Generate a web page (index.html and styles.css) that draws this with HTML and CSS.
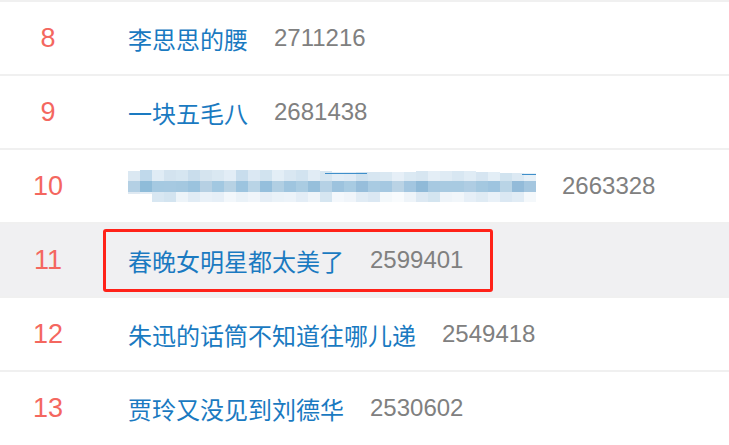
FILE: index.html
```html
<!DOCTYPE html>
<html lang="zh-CN">
<head>
    <meta charset="UTF-8">
    <meta name="viewport" content="width=device-width, initial-scale=1.0">
    <title>热搜榜</title>
    <link rel="stylesheet" href="styles.css">
</head>
<body>

    <ul class="hot-list">
        <li class="hot-item">
            <span class="rank">8</span>
            <a class="entry" href="#">
                <span class="title">李思思的腰</span>
                <span class="count">2711216</span>
            </a>
        </li>
        <li class="hot-item">
            <span class="rank">9</span>
            <a class="entry" href="#">
                <span class="title">一块五毛八</span>
                <span class="count">2681438</span>
            </a>
        </li>
        <li class="hot-item">
            <span class="rank">10</span>
            <a class="entry" href="#">
                <!-- title is pixelated in the source image -->
                <svg class="mosaic" width="408" height="33" viewBox="0 0 408 33" shape-rendering="crispEdges">
                    <g>
                        <rect x="0" y="1" width="12" height="10" fill="#dbe8f2"/><rect x="12" y="0" width="12" height="11" fill="#c0d9eb"/>
                        <rect x="24" y="0" width="12" height="11" fill="#e0ecf5"/><rect x="36" y="0" width="12" height="11" fill="#d3e3ef"/>
                        <rect x="48" y="0" width="12" height="11" fill="#d6e6f1"/><rect x="60" y="0" width="12" height="11" fill="#c9ddec"/>
                        <rect x="72" y="0" width="12" height="11" fill="#d5e4ef"/><rect x="84" y="0" width="12" height="11" fill="#dae8f2"/>
                        <rect x="96" y="0" width="12" height="11" fill="#e2edf6"/><rect x="108" y="0" width="12" height="11" fill="#c8dded"/>
                        <rect x="120" y="0" width="12" height="11" fill="#dbe8f3"/><rect x="132" y="0" width="12" height="11" fill="#d1e3ef"/>
                        <rect x="144" y="0" width="12" height="11" fill="#e3eef6"/><rect x="156" y="0" width="12" height="11" fill="#d9e7f2"/>
                        <rect x="168" y="0" width="12" height="11" fill="#d2e3f0"/><rect x="180" y="0" width="12" height="11" fill="#e1ecf5"/>
                        <rect x="192" y="1" width="12" height="10" fill="#d6e6f1"/><rect x="204" y="2" width="12" height="9" fill="#e2edf6"/>
                        <rect x="216" y="2" width="12" height="9" fill="#e0ebf5"/><rect x="228" y="2" width="12" height="9" fill="#d0e2ef"/>
                        <rect x="240" y="2" width="12" height="9" fill="#d7e6f1"/><rect x="252" y="2" width="12" height="9" fill="#dae8f2"/>
                        <rect x="264" y="2" width="12" height="9" fill="#e6eff7"/><rect x="276" y="2" width="12" height="9" fill="#dbe9f3"/>
                        <rect x="288" y="1" width="12" height="10" fill="#d7e6f1"/><rect x="300" y="1" width="12" height="10" fill="#e4eef6"/>
                        <rect x="312" y="1" width="12" height="10" fill="#dfebf4"/><rect x="324" y="1" width="12" height="10" fill="#d8e7f2"/>
                        <rect x="336" y="1" width="12" height="10" fill="#e0ecf5"/><rect x="348" y="2" width="12" height="9" fill="#d6e5f1"/>
                        <rect x="360" y="2" width="12" height="9" fill="#e3eef6"/><rect x="372" y="3" width="12" height="8" fill="#d1e3ef"/>
                        <rect x="384" y="3" width="12" height="8" fill="#dce9f3"/><rect x="396" y="3" width="12" height="8" fill="#e7f0f7"/>
                    </g>
                    <g>
                        <rect x="0" y="11" width="12" height="11" fill="#b4d0e4"/><rect x="12" y="11" width="12" height="11" fill="#8fbcd9"/>
                        <rect x="24" y="11" width="12" height="11" fill="#a5c9e1"/><rect x="36" y="11" width="12" height="11" fill="#a6c9e1"/>
                        <rect x="48" y="11" width="12" height="11" fill="#a4c8e0"/><rect x="60" y="11" width="12" height="11" fill="#9bc3de"/>
                        <rect x="72" y="11" width="12" height="11" fill="#b6d0e3"/><rect x="84" y="11" width="12" height="11" fill="#a2c8e1"/>
                        <rect x="96" y="11" width="12" height="11" fill="#b7d2e4"/><rect x="108" y="11" width="12" height="11" fill="#9cc4df"/>
                        <rect x="120" y="11" width="12" height="11" fill="#b9d4e6"/><rect x="132" y="11" width="12" height="11" fill="#95bfdc"/>
                        <rect x="144" y="11" width="12" height="11" fill="#b1cfe3"/><rect x="156" y="11" width="12" height="11" fill="#9fc5df"/>
                        <rect x="168" y="11" width="12" height="11" fill="#aacce2"/><rect x="180" y="11" width="12" height="11" fill="#96bfdb"/>
                        <rect x="192" y="11" width="12" height="11" fill="#b5d1e5"/><rect x="204" y="11" width="12" height="11" fill="#9dc3de"/>
                        <rect x="216" y="11" width="12" height="11" fill="#a8cbe2"/><rect x="228" y="11" width="12" height="11" fill="#97bedb"/>
                        <rect x="240" y="11" width="12" height="11" fill="#a9cbe2"/><rect x="252" y="11" width="12" height="11" fill="#a5c8e1"/>
                        <rect x="264" y="11" width="12" height="11" fill="#bad3e5"/><rect x="276" y="11" width="12" height="11" fill="#a3c6e0"/>
                        <rect x="288" y="11" width="12" height="11" fill="#90bad8"/><rect x="300" y="11" width="12" height="11" fill="#a7c9e1"/>
                        <rect x="312" y="11" width="12" height="11" fill="#a8cae1"/><rect x="324" y="11" width="12" height="11" fill="#a8cae1"/>
                        <rect x="336" y="11" width="12" height="11" fill="#afcde3"/><rect x="348" y="11" width="12" height="11" fill="#a4c8e0"/>
                        <rect x="360" y="11" width="12" height="11" fill="#9ec4df"/><rect x="372" y="11" width="12" height="11" fill="#b9d4e6"/>
                        <rect x="384" y="11" width="12" height="11" fill="#93bbd9"/><rect x="396" y="11" width="12" height="11" fill="#a4c6df"/>
                    </g>
                    <g>
                        <rect x="0" y="22" width="12" height="2" fill="#dfe9f2"/><rect x="12" y="22" width="12" height="2" fill="#e4edf5"/>
                        <rect x="24" y="22" width="12" height="10" fill="#d8e7f2"/><rect x="36" y="22" width="12" height="10" fill="#d3e4f0"/>
                        <rect x="48" y="22" width="12" height="10" fill="#edf4f9"/><rect x="60" y="22" width="12" height="10" fill="#e1ecf5"/>
                        <rect x="72" y="22" width="12" height="10" fill="#e9f1f8"/><rect x="84" y="22" width="12" height="10" fill="#e6eff7"/>
                        <rect x="96" y="22" width="12" height="10" fill="#f2f7fb"/><rect x="108" y="22" width="12" height="10" fill="#eaf2f8"/>
                        <rect x="120" y="22" width="12" height="10" fill="#f0f5fa"/><rect x="132" y="22" width="12" height="10" fill="#e5eef6"/>
                        <rect x="144" y="22" width="12" height="10" fill="#eaf2f8"/><rect x="156" y="22" width="12" height="10" fill="#ecf3f9"/>
                        <rect x="168" y="22" width="12" height="10" fill="#e3edf6"/><rect x="180" y="22" width="12" height="10" fill="#eef4f9"/>
                        <rect x="192" y="22" width="12" height="10" fill="#d6e6f1"/><rect x="204" y="22" width="12" height="10" fill="#f4f8fc"/>
                        <rect x="216" y="22" width="12" height="10" fill="#f0f5fa"/><rect x="228" y="22" width="12" height="10" fill="#e1ecf5"/>
                        <rect x="240" y="22" width="12" height="10" fill="#dbe8f3"/><rect x="252" y="22" width="12" height="10" fill="#f3f8fb"/>
                        <rect x="264" y="22" width="12" height="10" fill="#f8fbfd"/><rect x="276" y="22" width="12" height="10" fill="#eef4f9"/>
                        <rect x="288" y="22" width="12" height="10" fill="#dde9f3"/><rect x="300" y="22" width="12" height="10" fill="#d4e5f0"/>
                        <rect x="312" y="22" width="12" height="10" fill="#eef4f9"/><rect x="324" y="22" width="12" height="10" fill="#f1f6fa"/>
                        <rect x="336" y="22" width="12" height="10" fill="#e6eff7"/><rect x="348" y="22" width="12" height="10" fill="#dfebf4"/>
                        <rect x="360" y="22" width="12" height="10" fill="#e9f1f8"/><rect x="372" y="22" width="12" height="10" fill="#dbe8f3"/>
                        <rect x="384" y="22" width="12" height="10" fill="#e1ecf5"/><rect x="396" y="22" width="12" height="10" fill="#f4f8fb"/>
                    </g>
                    <rect x="197" y="3" width="42" height="1" fill="#3f8fca"/>
                    <rect x="394" y="4" width="14" height="1" fill="#3f8fca"/>
                </svg>
                <span class="count">2663328</span>
            </a>
        </li>
        <li class="hot-item active">
            <span class="rank">11</span>
            <a class="entry marked" href="#">
                <span class="title">春晚女明星都太美了</span>
                <span class="count">2599401</span>
            </a>
        </li>
        <li class="hot-item">
            <span class="rank">12</span>
            <a class="entry" href="#">
                <span class="title">朱迅的话筒不知道往哪儿递</span>
                <span class="count">2549418</span>
            </a>
        </li>
        <li class="hot-item">
            <span class="rank">13</span>
            <a class="entry" href="#">
                <span class="title">贾玲又没见到刘德华</span>
                <span class="count">2530602</span>
            </a>
        </li>
    </ul>

</body>
</html>
```

FILE: styles.css
```css
body {
    margin: 0;
    background: #fff;
    font-family: "Liberation Sans", Arial, "Noto Sans CJK SC", sans-serif;
}

.hot-list {
    list-style: none;
    margin: 0;
    padding: 0;
}

.hot-item {
    display: flex;
    align-items: center;
    height: 72px;
    border-top: 2px solid #f0f0f0;
}

.hot-item.active {
    background: #f0f0f2;
}

.rank {
    width: 96px;
    text-align: center;
    font-size: 27px;
    color: #f4675f;
}

.entry {
    display: flex;
    align-items: center;
    height: 57px;
    margin-left: 7px;
    padding: 0 27px 0 22px;
    border: 3px solid transparent;
    border-radius: 3px;
    text-decoration: none;
}

.entry.marked {
    border-color: #ff2219;
}

.title {
    font-family: "Noto Sans CJK SC", sans-serif;
    font-size: 24px;
    color: #1a7ac1;
}

.mosaic {
    display: block;
}

.count {
    margin-left: 26px;
    font-size: 24px;
    color: #808080;
}
```
